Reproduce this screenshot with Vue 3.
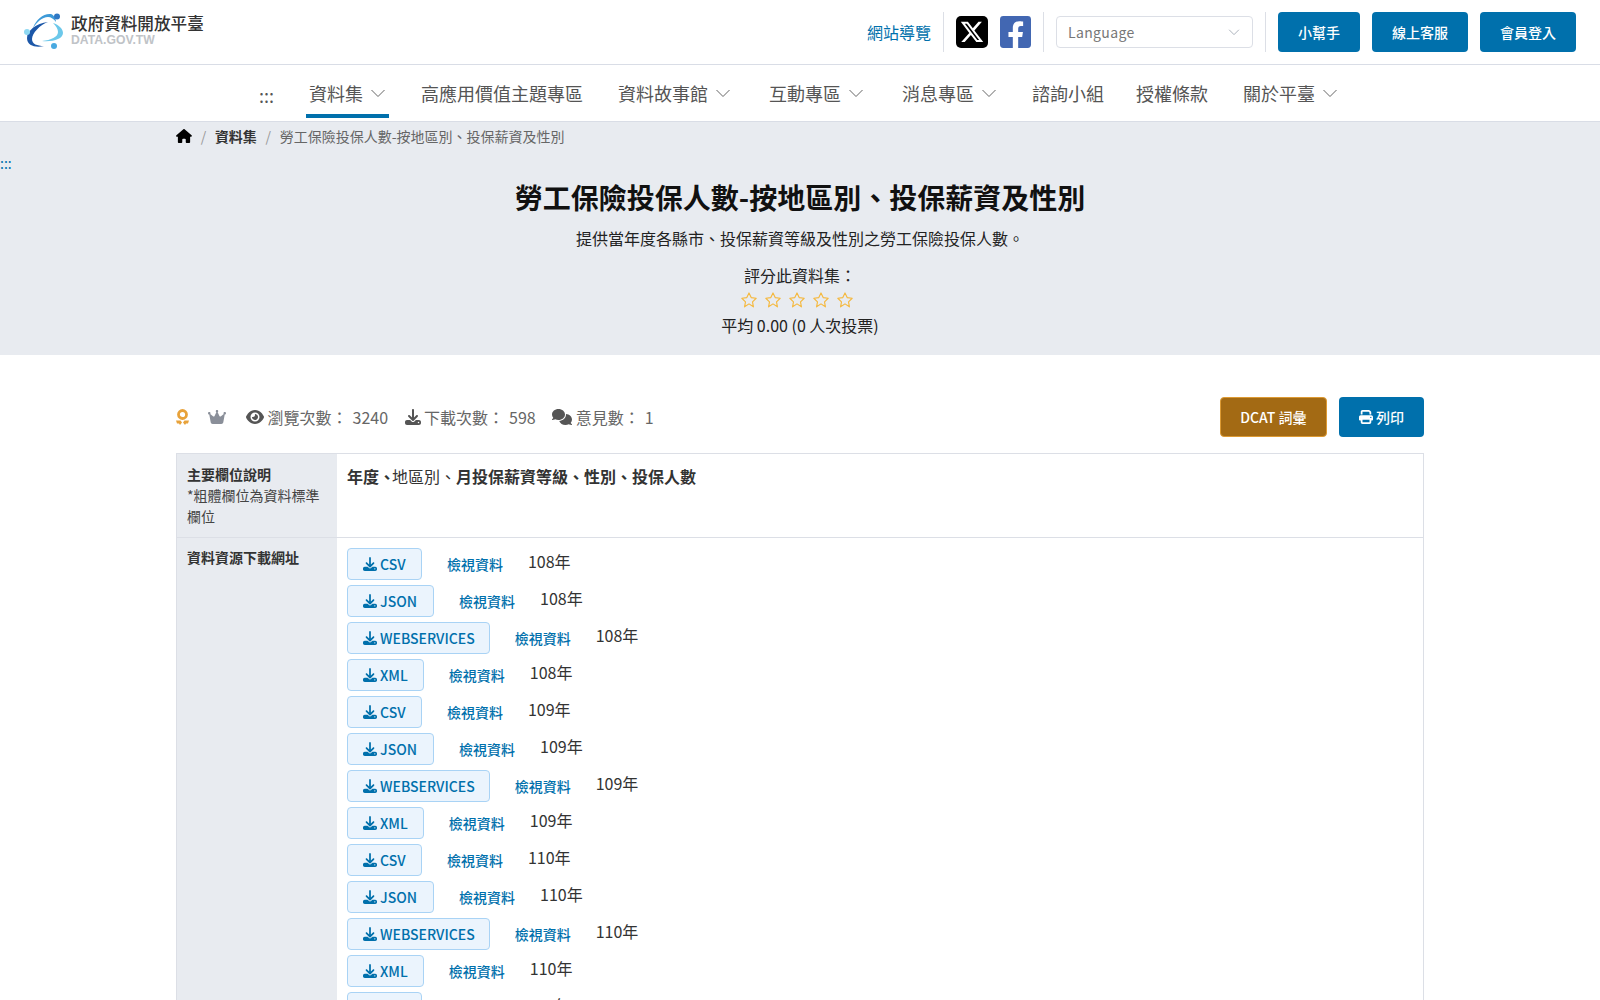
<template>
  <div class="page">
    <header class="top">
      <a class="brand">
        <svg class="logo" viewBox="0 0 40 36" width="40" height="36">
          <path d="M29 10c6 2 10 6 10 10 0 6-10 9-21 8 9-1 16-4 16-9 0-3-2-6-5-9z" fill="#6cc8ea" />
          <path d="M9 15C12 6 20 0 27 1c3 1 5 5 5 8-2-3-5-5-8-5-6 0-11 5-15 11z" fill="#3d9ad8" />
          <path d="M24 9C16 12 8 20 8 26c0 5 5 7 12 7-8 2-17 0-17-8C3 18 12 10 24 9z" fill="#1c57a8" />
          <circle cx="33" cy="3.500" r="3" fill="#2f78c4" />
          <circle cx="3" cy="19" r="3" fill="#8ed8f2" />
          <circle cx="30" cy="33" r="3" fill="#49a9e0" />
        </svg>
        <span class="brandText">
          <span class="brandName">政府資料開放平臺</span>
          <span class="brandSub">DATA.GOV.TW</span>
        </span>
      </a>
      <div class="topRight">
        <a class="siteMap">網站導覽</a>
        <span class="sep"></span>
        <svg class="social" viewBox="0 0 32 32" width="32" height="32">
          <rect width="32" height="32" rx="5" fill="#000" />
          <path transform="translate(3.500 3.500) scale(1.040)" d="M18.244 2.250h3.308l-7.227 8.260 8.502 11.240H16.170l-5.214-6.817L4.990 21.750H1.680l7.730-8.835L1.254 2.250H8.080l4.713 6.231zm-1.161 17.520h1.833L7.084 4.126H5.117z" fill="#fff" />
        </svg>
        <svg class="social" viewBox="0 32 448 448" width="31" height="32" preserveAspectRatio="none">
          <path d="M400 32H48A48 48 0 0 0 0 80v352a48 48 0 0 0 48 48h137.250V327.690h-63V256h63v-54.640c0-62.150 37-96.480 93.670-96.480 27.140 0 55.520 4.840 55.520 4.840v61h-31.270c-30.810 0-40.420 19.120-40.420 38.730V256h68.780l-11 71.690h-57.780V480H400a48 48 0 0 0 48-48V80a48 48 0 0 0-48-48z" fill="#4267b2" />
        </svg>
        <span class="sep"></span>
        <div class="lang">
          <span>Language</span>
          <svg viewBox="0 0 16 16" width="12" height="12"><path d="M1.500 5l6.500 6.500L14.500 5" fill="none" stroke="#aab0ba" stroke-width="1.300" /></svg>
        </div>
        <span class="sep"></span>
        <a class="btn">小幫手</a>
        <a class="btn">線上客服</a>
        <a class="btn">會員登入</a>
      </div>
    </header>

    <nav class="nav">
      <span class="dots">:::</span>
      <a v-for="item in navItems" :key="item.label" class="navItem" :class="{ active: item.active }">
        {{ item.label }}
        <svg v-if="item.menu" viewBox="0 0 16 16" width="16" height="16"><path d="M1.500 5l6.500 6.500L14.500 5" fill="none" stroke="#666" stroke-width="1" /></svg>
      </a>
    </nav>

    <section class="hero">
      <div class="crumbs">
        <svg viewBox="0 0 576 512" width="16" height="14"><path :d="icons.home" fill="#000" /></svg>
        <span class="slash">/</span>
        <b>資料集</b>
        <span class="slash">/</span>
        <span class="crumbNow">勞工保險投保人數-按地區別、投保薪資及性別</span>
      </div>
      <a class="accessKey">:::</a>
      <h1>勞工保險投保人數-按地區別、投保薪資及性別</h1>
      <p class="desc">提供當年度各縣市、投保薪資等級及性別之勞工保險投保人數。</p>
      <div class="rateLabel">評分此資料集：</div>
      <div class="stars">
        <svg v-for="n in 5" :key="n" viewBox="0 0 24 24" width="18" height="18">
          <path d="M12 2.600l2.900 6.200 6.700.9-4.900 4.700 1.200 6.700L12 17.200l-5.900 3.900 1.200-6.700-4.900-4.700 6.700-.9z" fill="none" stroke="#f5b83d" stroke-width="1.500" stroke-linejoin="round" />
        </svg>
      </div>
      <div class="avg">平均 0.00 (0 人次投票)</div>
    </section>

    <main class="content">
      <div class="statRow">
        <div class="stats">
          <svg class="medal" viewBox="0 0 13 16" width="13" height="16">
            <circle cx="6.500" cy="5.500" r="4" fill="none" stroke="#e8a23a" stroke-width="2.800" />
            <path d="M0 11.500h4.500L6 13.500l-2 2.500-1-1.500H1zM13 11.500H8.500L7 13.500l2 2.500 1-1.500h2z" fill="#e8a23a" />
          </svg>
          <svg class="crown" viewBox="0 0 576 512" width="18" height="16"><path :d="icons.crown" fill="#8a8f99" /></svg>
          <span class="stat">
            <svg viewBox="0 0 576 512" width="18" height="16"><path :d="icons.eye" fill="#555" /></svg>
            <span>瀏覽次數：</span><span class="num">3240</span>
          </span>
          <span class="stat">
            <svg viewBox="0 0 512 512" width="16" height="16"><path :d="icons.download" fill="#555" /></svg>
            <span>下載次數：</span><span class="num">598</span>
          </span>
          <span class="stat">
            <svg viewBox="0 0 640 512" width="20" height="16"><path :d="icons.comments" fill="#555" /></svg>
            <span>意見數：</span><span class="num">1</span>
          </span>
        </div>
        <div class="statBtns">
          <a class="btn dcat">DCAT 詞彙</a>
          <a class="btn">
            <svg viewBox="0 0 512 512" width="14" height="14"><path :d="icons.print" fill="#fff" /></svg>
            列印
          </a>
        </div>
      </div>

      <div class="table">
        <div class="row">
          <div class="th">
            <b>主要欄位說明</b>
            <div>*粗體欄位為資料標準欄位</div>
          </div>
          <div class="td fields">
            <b class="first">年度、</b>地區別、<b>月投保薪資等級、性別、投保人數</b>
          </div>
        </div>
        <div class="row">
          <div class="th"><b>資料資源下載網址</b></div>
          <div class="td">
            <div v-for="(res, i) in resources" :key="i" class="res">
              <a class="dl" :class="res.type">
                <svg viewBox="0 0 512 512" width="14" height="14"><path :d="icons.download" fill="#0070ac" /></svg>
                {{ res.type }}
              </a>
              <a class="view">檢視資料</a>
              <span class="year">{{ res.year }}年</span>
            </div>
          </div>
        </div>
      </div>
    </main>
  </div>
</template>

<script setup>
const navItems = [
  { label: '資料集', menu: true, active: true },
  { label: '高應用價值主題專區' },
  { label: '資料故事館', menu: true },
  { label: '互動專區', menu: true },
  { label: '消息專區', menu: true },
  { label: '諮詢小組' },
  { label: '授權條款' },
  { label: '關於平臺', menu: true },
]

const resources = []
for (const year of [108, 109, 110, 111]) {
  for (const type of ['CSV', 'JSON', 'WEBSERVICES', 'XML']) {
    resources.push({ type, year })
  }
}

const icons = {
  home: 'M575.8 255.500c0 18-15 32.100-32 32.100h-32l.7 160.200c0 2.700-.2 5.400-.5 8.100V472c0 22.100-17.900 40-40 40H456c-1.100 0-2.200 0-3.300-.1c-1.400 .1-2.800 .1-4.200 .1H416 392c-22.100 0-40-17.900-40-40V448 384c0-17.700-14.300-32-32-32H256c-17.700 0-32 14.300-32 32v64 24c0 22.100-17.900 40-40 40H160 128.100c-1.500 0-3-.1-4.500-.2c-1.200 .1-2.400 .2-3.600 .2H104c-22.100 0-40-17.900-40-40V360c0-.9 0-1.900 .1-2.800V287.600H32c-18 0-32-14-32-32.100c0-9 3-17 10-24L266.400 8c7-7 15-8 22-8s15 2 21 7L564.800 231.500c8 7 12 15 11 24z',
  crown: 'M309 106c11.400-7 19-19.700 19-34c0-22.100-17.900-40-40-40s-40 17.900-40 40c0 14.400 7.600 27 19 34L209.700 220.600c-9.100 18.200-32.700 23.400-48.600 10.700L72 160c5-6.700 8-15 8-24c0-22.100-17.900-40-40-40S0 113.900 0 136s17.900 40 40 40c.2 0 .5 0 .7 0L86.400 427.400c5.500 30.400 32 52.600 63 52.600H426.600c30.900 0 57.400-22.100 63-52.600L535.300 176c.2 0 .5 0 .7 0c22.100 0 40-17.900 40-40s-17.900-40-40-40s-40 17.900-40 40c0 9 3 17.300 8 24l-89.100 71.300c-15.900 12.700-39.500 7.500-48.600-10.700L309 106z',
  eye: 'M288 32c-80.800 0-145.500 36.800-192.600 80.600C48.600 156 17.300 208 2.500 243.700c-3.300 7.900-3.300 16.700 0 24.600C17.300 304 48.600 356 95.400 399.400C142.500 443.200 207.200 480 288 480s145.500-36.800 192.600-80.600c46.800-43.500 78.100-95.400 93-131.100c3.300-7.900 3.300-16.700 0-24.600c-14.900-35.700-46.200-87.700-93-131.100C433.500 68.800 368.800 32 288 32zM144 256a144 144 0 1 1 288 0 144 144 0 1 1 -288 0zm144-64c0 35.300-28.700 64-64 64c-7.100 0-13.900-1.200-20.300-3.300c-5.500-1.800-11.900 1.600-11.700 7.400c.3 6.900 1.300 13.800 3.200 20.700c13.700 51.200 66.400 81.600 117.600 67.900s81.600-66.400 67.900-117.600c-11.100-41.500-47.800-69.400-88.600-71.100c-5.800-.2-9.200 6.100-7.400 11.700c2.100 6.400 3.300 13.200 3.300 20.300z',
  download: 'M288 32c0-17.700-14.300-32-32-32s-32 14.300-32 32V274.700l-73.400-73.400c-12.500-12.500-32.800-12.500-45.300 0s-12.500 32.800 0 45.300l128 128c12.500 12.500 32.800 12.500 45.300 0l128-128c12.500-12.500 12.500-32.800 0-45.300s-32.800-12.500-45.300 0L288 274.700V32zM64 352c-35.300 0-64 28.700-64 64v32c0 35.300 28.700 64 64 64H448c35.300 0 64-28.700 64-64V416c0-35.300-28.700-64-64-64H346.500l-45.300 45.300c-25 25-65.500 25-90.500 0L165.500 352H64zm368 56a24 24 0 1 1 0 48 24 24 0 1 1 0-48z',
  comments: 'M208 352c114.900 0 208-78.800 208-176S322.900 0 208 0S0 78.800 0 176c0 38.600 14.700 74.300 39.600 103.400c-3.500 9.400-8.700 17.700-14.200 24.700c-4.800 6.200-9.700 11-13.300 14.300c-1.800 1.600-3.300 2.900-4.300 3.700c-.5 .4-.9 .7-1.100 .8l-.2 .2 0 0 0 0C1 327.200-1.400 334.400 .8 340.900S9.100 352 16 352c21.800 0 43.800-5.600 62.100-12.500c9.200-3.500 17.800-7.400 25.300-11.400C134.100 343.300 169.800 352 208 352zM448 176c0 112.300-99.100 196.900-216.500 207C255.800 457.700 336.400 512 432 512c38.200 0 73.900-8.700 104.700-23.900c7.500 4 16 7.900 25.200 11.400c18.300 6.900 40.300 12.500 62.100 12.500c6.900 0 13.100-4.500 15.200-11.100c2.100-6.600-.2-13.800-5.800-17.900l0 0 0 0-.2-.2c-.2-.2-.6-.4-1.100-.8c-1-.8-2.500-2-4.300-3.700c-3.600-3.300-8.500-8.100-13.300-14.300c-5.500-7-10.700-15.400-14.200-24.700c24.900-29 39.600-64.700 39.600-103.400c0-92.800-84.900-168.900-192.600-175.500c.4 5.100 .6 10.300 .6 15.500z',
  print: 'M128 0C92.700 0 64 28.700 64 64v96h64V64H354.700L384 93.300V160h64V93.300c0-17-6.700-33.300-18.700-45.300L400 18.700C388 6.700 371.700 0 354.700 0H128zM384 352v32 64H128V384 368 352H384zm64 32h32c17.700 0 32-14.300 32-32V256c0-35.300-28.700-64-64-64H64c-35.300 0-64 28.700-64 64v96c0 17.700 14.300 32 32 32H64v64c0 35.300 28.700 64 64 64H384c35.300 0 64-28.700 64-64V384zM432 248a24 24 0 1 1 0 48 24 24 0 1 1 0-48z',
}
</script>

<style>
body {
  font-family: "Noto Sans CJK TC", "Noto Sans", sans-serif;
  color: #333;
}
</style>

<style scoped>
.page {
  height: 100vh;
  overflow: hidden;
  background: #fff;
  font-family: "Noto Sans CJK TC", "Noto Sans", sans-serif;
}

.top {
  height: 65px;
  box-sizing: border-box;
  padding: 0 24px;
  display: flex;
  align-items: center;
  justify-content: space-between;
  border-bottom: 1px solid #d9dde6;
}

.brand {
  display: flex;
  align-items: center;
  gap: 7px;
}

.logo {
  margin-top: -3px;
}

.brandText {
  display: flex;
  flex-direction: column;
  margin-top: -3px;
}

.brandName {
  font-size: 16.600px;
  line-height: 19px;
  font-weight: 500;
  color: #333;
}

.brandSub {
  font-family: "Liberation Sans", sans-serif;
  font-size: 12.200px;
  line-height: 14px;
  font-weight: 700;
  color: #c0c3c7;
}

.topRight {
  display: flex;
  align-items: center;
  gap: 12px;
}

.siteMap {
  color: #0070ac;
  font-size: 16px;
}

.sep {
  width: 1px;
  height: 40px;
  background: #dcdfe6;
}

.lang {
  width: 197px;
  height: 32px;
  box-sizing: border-box;
  padding: 0 12px 0 11px;
  display: flex;
  align-items: center;
  justify-content: space-between;
  border: 1px solid #dcdfe6;
  border-radius: 4px;
  font-size: 14px;
  color: #777;
  letter-spacing: 0.35px;
}

.btn {
  height: 40px;
  box-sizing: border-box;
  padding: 0 20px;
  display: inline-flex;
  align-items: center;
  gap: 3px;
  background: #0070ac;
  color: #fff;
  border-radius: 4px;
  font-size: 14px;
  font-weight: 500;
}

.nav {
  height: 57px;
  box-sizing: border-box;
  padding-left: 259px;
  display: flex;
  align-items: stretch;
  gap: 29px;
  border-bottom: 1px solid #d9dde6;
}

.dots {
  align-self: center;
  width: 14px;
  margin-right: 4px;
  margin-top: 3px;
  font-size: 18px;
  color: #555;
}

.navItem {
  display: flex;
  align-items: center;
  gap: 7px;
  padding: 6px 3px 0;
  font-size: 18px;
  color: #555;
  border-bottom: 4px solid transparent;
  margin-bottom: 3px;
}

.navItem:nth-of-type(4),
.navItem:nth-of-type(5) {
  margin-left: 3px;
}

.navItem:nth-of-type(7) {
  margin-left: -3px;
}

.navItem.active {
  border-bottom-color: #0070ac;
}

.hero {
  height: 233px;
  box-sizing: border-box;
  background: #e8ebf0;
  text-align: center;
}

.crumbs {
  width: 1248px;
  margin: 0 auto;
  height: 27px;
  display: flex;
  align-items: center;
  font-size: 14px;
  color: #333;
}

.slash {
  color: #999;
  margin: 0 8.700px;
}

.crumbNow {
  color: #666;
}

.accessKey {
  display: block;
  text-align: left;
  margin-top: 4px;
  height: 20px;
  font-size: 14px;
  line-height: 20px;
  color: #0070ac;
}

h1 {
  margin: 4px 0 0;
  font-size: 28px;
  line-height: 40px;
  font-weight: 700;
  color: #111;
}

.desc {
  margin: 9px 0 0;
  font-size: 16px;
  line-height: 24px;
  color: #222;
}

.rateLabel {
  margin-top: 13px;
  font-size: 16px;
  line-height: 24px;
  color: #222;
}

.stars {
  display: flex;
  justify-content: center;
  gap: 6px;
  height: 26px;
  padding-right: 6px;
  align-items: center;
}

.avg {
  font-size: 16px;
  line-height: 24px;
  color: #222;
}

.content {
  width: 1248px;
  margin: 0 auto;
}

.statRow {
  margin-top: 42px;
  height: 40px;
  display: flex;
  align-items: center;
  justify-content: space-between;
}

.stats {
  display: flex;
  align-items: center;
  font-size: 16px;
  color: #666;
}

.medal {
  margin-right: 19px;
}

.crown {
  margin-right: 20px;
}

.stat {
  display: flex;
  align-items: center;
  gap: 3.500px;
  margin-right: 16.500px;
}

.num {
  margin-left: 1.500px;
}

.statBtns {
  display: flex;
  gap: 12px;
}

.dcat {
  padding: 0 19.500px;
  background: #a36a14;
  border: 1px solid #dd9a33;
}

.table {
  margin-top: 16px;
  border: 1px solid #dcdfe6;
  border-bottom: 0;
}

.row {
  display: flex;
  border-bottom: 1px solid #dcdfe6;
}

.th {
  width: 160px;
  flex: none;
  box-sizing: border-box;
  padding: 10px;
  background: #e8ebf0;
  font-size: 14px;
  line-height: 21px;
  color: #444;
}

.row + .row .th {
  padding-top: 9px;
}

.th b {
  color: #333;
}

.td {
  flex: 1;
  padding: 10px;
  font-size: 16px;
  line-height: 24px;
  color: #333;
}

.fields {
  min-height: 83px;
  box-sizing: border-box;
}

.first {
  margin-right: -3px;
}

.res {
  height: 32px;
  margin-bottom: 5px;
  display: flex;
  align-items: center;
  gap: 25px;
}

.dl {
  height: 32px;
  box-sizing: border-box;
  padding: 0 15px;
  display: inline-flex;
  align-items: center;
  gap: 3px;
  border: 1px solid #a9d3f5;
  border-radius: 4px;
  background: #ebf4fd;
  color: #0070ac;
  font-size: 14px;
  font-weight: 500;
}

.dl.CSV {
  padding-right: 15.500px;
}

.dl.JSON {
  padding-right: 16px;
}

.dl.WEBSERVICES {
  padding-right: 14px;
}

.view {
  margin-top: -1px;
  color: #0070ac;
  font-size: 14px;
  font-weight: 500;
}

.year {
  margin-top: -7px;
  font-size: 16px;
  color: #333;
}
</style>
